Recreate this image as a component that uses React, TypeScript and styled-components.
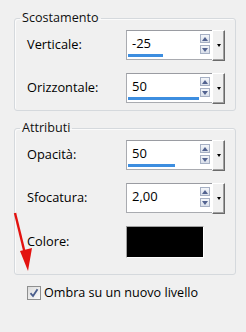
import React from 'react';
import styled, { createGlobalStyle } from 'styled-components';

const GlobalStyle = createGlobalStyle`
  html, body {
    margin: 0;
    padding: 0;
    background: #f0f0f0;
  }
  body {
    font-family: "Open Sans", "Noto Sans", sans-serif;
    color: #000;
  }
`;

const Panel = styled.div`
  position: relative;
  width: 246px;
  height: 332px;
  box-sizing: border-box;
  padding: 10px 0 0 14px;
  overflow: hidden;
`;

const Group = styled.fieldset<{ $padBottom: number; $gapTop?: number }>`
  box-sizing: border-box;
  width: 222px;
  margin: ${p => p.$gapTop || 0}px 0 0 0;
  padding: 4px 0 ${p => p.$padBottom}px 12px;
  border: 1px solid #d5d9dd;
  border-radius: 3px;
  box-shadow: inset 1px 1px 0 #fbfbfb;
`;

const Legend = styled.legend`
  margin-left: -7px;
  padding: 0 2px;
  font-size: 12.6px;
  line-height: 16px;
  color: #111;
`;

const Rows = styled.div`
  display: grid;
  grid-template-columns: 99px 99px;
  row-gap: 13px;
  align-items: center;
`;

const Label = styled.span`
  font-size: 12.8px;
  line-height: 18px;
  margin-top: -2px;
`;

const SpinBox = styled.div`
  box-sizing: border-box;
  display: flex;
  height: 30px;
  border: 1px solid #a9abb0;
  border-top-color: #9a9ca2;
  background: #fff;
`;

const Field = styled.div`
  flex: 1;
  display: flex;
  flex-direction: column;
  justify-content: flex-end;
  padding: 0 0 2px 1px;
`;

const Value = styled.span`
  padding-left: 4px;
  font-size: 13px;
  line-height: 17px;
  margin-bottom: 2px;
`;

const Track = styled.div`
  height: 3px;
`;

const Fill = styled.div`
  height: 100%;
  background: #3d8ee0;
`;

const SpinCol = styled.div`
  display: flex;
  flex-direction: column;
  gap: 2px;
  padding: 3px 2px 0 1px;
`;

const Arrow = styled.div<{ $down?: boolean }>`
  box-sizing: border-box;
  width: 10px;
  height: 9px;
  border: 1px solid #a6b0c4;
  background: linear-gradient(#f4f6fa, #d9dfea);
  display: flex;
  align-items: center;
  justify-content: center;
  &::after {
    content: '';
    width: 0;
    height: 0;
    border-left: 3px solid transparent;
    border-right: 3px solid transparent;
    ${p => p.$down ? 'border-top: 4px solid #52628f;' : 'border-bottom: 4px solid #52628f;'}
  }
`;

const DropBtn = styled.div`
  box-sizing: border-box;
  width: 13px;
  margin: -1px -1px -2px 0;
  background: #f0f0f0;
  border-left: 1px solid #fff;
  border-top: 1px solid #fff;
  border-right: 1px solid #6a6a6a;
  border-bottom: 1px solid #6a6a6a;
  box-shadow: inset -1px -1px 0 #a0a0a0;
  display: flex;
  align-items: center;
  justify-content: center;
  &::after {
    content: '';
    width: 0;
    height: 0;
    border-left: 2px solid transparent;
    border-right: 2px solid transparent;
    border-top: 3px solid #000;
  }
`;

const Swatch = styled.div`
  box-sizing: border-box;
  width: 78px;
  height: 32px;
  background: #000;
  border: 1px solid #fff;
  border-top-color: #a0a0a0;
  border-left-color: #a0a0a0;
`;

const CheckRow = styled.label`
  display: flex;
  align-items: center;
  gap: 3px;
  margin: 9px 0 0 13px;
  font-size: 12.6px;
  line-height: 18px;
`;

const Box = styled.span`
  box-sizing: border-box;
  width: 14px;
  height: 14px;
  border: 1px solid #8e8f8f;
  background: linear-gradient(135deg, #dcdcdc, #fbfbfb);
  display: flex;
  align-items: center;
  justify-content: center;
`;

const RedArrow = styled.svg`
  position: absolute;
  left: 8px;
  top: 208px;
`;

type SpinProps = { value: string; fill: number };

const Spin: React.FC<SpinProps> = ({ value, fill }) => (
  <SpinBox>
    <Field>
      <Value>{value}</Value>
      <Track>
        <Fill style={{ width: fill }} />
      </Track>
    </Field>
    <SpinCol>
      <Arrow />
      <Arrow $down />
    </SpinCol>
    <DropBtn />
  </SpinBox>
);

export default function App() {
  return (
    <>
      <GlobalStyle />
      <Panel>
        <Group $padBottom={7}>
          <Legend>Scostamento</Legend>
          <Rows>
            <Label>Verticale:</Label>
            <Spin value="-25" fill={35} />
            <Label>Orizzontale:</Label>
            <Spin value="50" fill={71} />
          </Rows>
        </Group>
        <Group $padBottom={16} $gapTop={9}>
          <Legend>Attributi</Legend>
          <Rows>
            <Label>Opacità:</Label>
            <Spin value="50" fill={47} />
            <Label>Sfocatura:</Label>
            <Spin value="2,00" fill={0} />
            <Label>Colore:</Label>
            <Swatch />
          </Rows>
        </Group>
        <CheckRow>
          <Box>
            <svg width="10" height="10" viewBox="0 0 10 10">
              <path d="M1.5 5.2 L4 8 L8.5 1.2" fill="none" stroke="#4a5e8c" strokeWidth="1.8" />
            </svg>
          </Box>
          Ombra su un nuovo livello
        </CheckRow>
        <RedArrow width="30" height="66" viewBox="0 0 30 66">
          <path d="M7 5 L18 50" stroke="#e3120f" strokeWidth="2.4" fill="none" />
          <path d="M12 43 L24 40 L20 63 Z" fill="#e3120f" />
        </RedArrow>
      </Panel>
    </>
  );
}
